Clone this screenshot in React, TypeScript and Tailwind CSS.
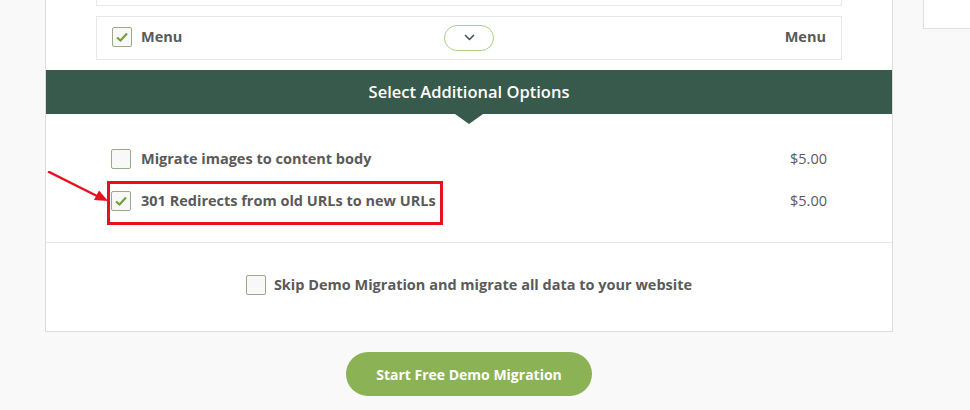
import React from 'react'

function Box({ checked }: { checked?: boolean }) {
    return (
        <span className="w-[20px] h-[20px] shrink-0 rounded-[2px] border border-[#9aaa86] bg-[#f8f8f8] flex items-center justify-center">
            {checked && (
                <svg width="14" height="12" viewBox="0 0 14 12">
                    <path d="M2 6.5 L5.5 9.5 L12 2.5" fill="none" stroke="#74a03a" strokeWidth="2.2" />
                </svg>
            )}
        </span>
    )
}

export default function App() {
    return (
        <div
            className="w-[970px] h-[410px] bg-[#f9f9f9] flex overflow-hidden text-[#5a5a5a]"
            style={{ fontFamily: '"Open Sans", "Liberation Sans", sans-serif' }}
        >
            <div className="w-[45px] shrink-0" />

            <div className="w-[848px] shrink-0 flex flex-col">
                <div className="h-[332px] bg-white border-x border-b border-[#dcdcdc] flex flex-col">
                    <div className="px-[50px]">
                        <div className="h-[6px] border-x border-b border-[#e8e8e8]" />
                        <div className="mt-[10px] h-[44px] border border-[#e8e8e8] grid grid-cols-[1fr_auto_1fr] items-center px-[15px] leading-[20px]">
                            <div className="flex items-center -mt-[2px]">
                                <Box checked />
                                <span className="ml-[9px] text-[14.5px] font-bold">Menu</span>
                            </div>
                            <span className="w-[50px] h-[26px] -mt-[1px] rounded-full border border-[#a8d27f] flex items-center justify-center">
                                <svg width="11" height="7" viewBox="0 0 11 7">
                                    <path d="M1 1 L5.5 5.5 L10 1" fill="none" stroke="#3d4a5c" strokeWidth="1.5" />
                                </svg>
                            </span>
                            <span className="justify-self-end -mt-[2px] text-[14.5px] font-bold">Menu</span>
                        </div>
                    </div>

                    <div className="relative mt-[10px] h-[44px] bg-[#385a4c] flex items-center justify-center">
                        <span className="text-white text-[16.5px] font-semibold">Select Additional Options</span>
                        <span className="absolute left-[409px] top-[44px] w-0 h-0 border-l-[14px] border-r-[14px] border-t-[10px] border-l-transparent border-r-transparent border-t-[#385a4c]" />
                    </div>

                    <div className="h-[129px] px-[65px] pt-[35px] flex flex-col gap-[22px] border-b border-[#e6e6e6] leading-[20px]">
                        <div className="flex items-center">
                            <Box />
                            <span className="ml-[10px] text-[14.5px] font-bold">Migrate images to content body</span>
                            <span className="ml-auto text-[14.5px]">$5.00</span>
                        </div>
                        <div className="relative flex items-center">
                            <Box checked />
                            <span className="ml-[10px] text-[14.5px] font-bold">301 Redirects from old URLs to new URLs</span>
                            <span className="ml-auto text-[14.5px]">$5.00</span>
                            <span className="absolute left-[-4px] top-[-10px] w-[336px] h-[44px] border-[3px] border-[#e8101d]" />
                            <svg className="absolute left-[-64px] top-[-20px]" width="64" height="36" viewBox="0 0 64 36">
                                <path d="M1 0.5 L50 25" stroke="#e8101d" strokeWidth="2.5" />
                                <path d="M61 30 L47 29 L52 19.5 Z" fill="#e8101d" />
                            </svg>
                        </div>
                    </div>

                    <div className="flex-1 flex items-center justify-center pb-[4px] leading-[20px]">
                        <Box />
                        <span className="ml-[8px] text-[14.5px] font-bold">Skip Demo Migration and migrate all data to your website</span>
                    </div>
                </div>

                <div className="flex justify-center mt-[20px]">
                    <button className="w-[246px] h-[44px] rounded-full bg-[#8bb254] text-white text-[14px] font-bold">
                        Start Free Demo Migration
                    </button>
                </div>
            </div>

            <div className="flex-1 pl-[30px]">
                <div className="h-[29px] bg-white border-l border-b border-[#e2e2e2]" />
            </div>
        </div>
    )
}
